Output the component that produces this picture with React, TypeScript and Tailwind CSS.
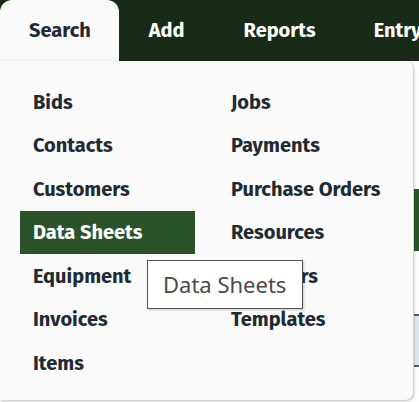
import React from "react";

const col1 = ["Bids", "Contacts", "Customers", "Data Sheets", "Equipment", "Invoices", "Items"];
const col2 = ["Jobs", "Payments", "Purchase Orders", "Resources", "Suppliers", "Templates"];

function Item({ label, active }: { label: string; active?: boolean }) {
  return (
    <div
      className={
        "h-[43.5px] flex items-center pl-[13px] text-[20px] font-bold " +
        (active ? "bg-[#2b5329] text-white" : "text-[#1f2b33]")
      }
    >
      {label}
    </div>
  );
}

export default function App() {
  return (
    <div
      className="relative w-[419px] h-[402px] overflow-hidden bg-[#fdfdfd]"
      style={{ fontFamily: "'Fira Sans', Lato, 'Noto Sans', sans-serif" }}
    >
      {/* background content on the right */}
      <div className="absolute left-[414px] top-[189px] w-[10px] h-[62px] bg-[#2b5329]" />
      <div className="absolute left-[414px] top-[314px] w-[10px] h-[53px] bg-[#dfe5ef] border-y-2 border-[#5a5a5a]" />

      {/* nav bar */}
      <div className="relative flex h-[61px] bg-[#182b17]">
        <div className="flex items-center pb-[2px] pl-[29px] pr-[28px] bg-[#fafafa] rounded-t-[12px] text-[20px] font-bold text-[#1f2b33]">
          Search
        </div>
        <div className="flex items-center pb-[2px] px-[30px] text-[20px] font-bold text-white">Add</div>
        <div className="flex items-center pb-[2px] px-[29px] text-[20px] font-bold text-white">Reports</div>
        <div className="flex items-center pb-[2px] px-[29px] text-[20px] font-bold text-white">Entry</div>
      </div>

      {/* dropdown panel */}
      <div className="relative w-[413px] h-[339px] bg-[#fafafa] rounded-r-[8px] shadow-[1px_1px_3px_rgba(0,0,0,0.25)] pt-[19px] pl-[20px]">
        <div className="flex gap-[23px]">
          <div className="w-[175px] flex flex-col">
            {col1.map((l) => (
              <Item key={l} label={l} active={l === "Data Sheets"} />
            ))}
          </div>
          <div className="w-[175px] flex flex-col">
            {col2.map((l) => (
              <Item key={l} label={l} />
            ))}
          </div>
        </div>
      </div>

      {/* tooltip */}
      <div
        className="absolute left-[147px] top-[260px] w-[156px] h-[49px] bg-white border border-[#555] flex items-center pl-[15px] text-[22px] text-[#4a4a4a] shadow-[1px_1px_2px_rgba(0,0,0,0.2)]"
        style={{ fontFamily: "'Segoe UI', 'Noto Sans', sans-serif" }}
      >
        Data Sheets
      </div>
    </div>
  );
}
